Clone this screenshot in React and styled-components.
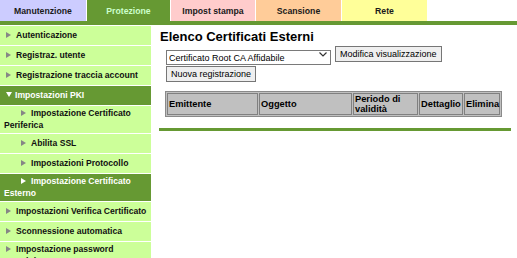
import React from 'react';
import styled, { createGlobalStyle } from 'styled-components';

const Global = createGlobalStyle`
  html, body { margin: 0; padding: 0; background: #fff; }
  body { font-family: "Liberation Sans", Arial, sans-serif; color: #000; }
  * { box-sizing: border-box; }
`;

const Page = styled.div`
  width: 517px;
  height: 258px;
  overflow: hidden;
`;

const TabBar = styled.div`
  display: flex;
  gap: 1px;
  border-bottom: 4px solid #669933;
`;

const Tab = styled.div`
  width: ${p => p.$w}px;
  height: 21px;
  background: ${p => p.$bg};
  color: ${p => (p.$active ? '#ccffcc' : '#1a1a1a')};
  font-size: 8.7px;
  font-weight: bold;
  display: flex;
  align-items: center;
  justify-content: center;
`;

const Body = styled.div`
  display: flex;
  margin-top: 1px;
`;

const Sidebar = styled.nav`
  width: 151px;
  flex: none;
  display: flex;
  flex-direction: column;
  gap: 1px;
`;

const Row = styled.div`
  display: flex;
  align-items: center;
  min-height: 19px;
  padding: 2px 0 2px ${p => (p.$level ? 4 : 6)}px;
  background: ${p => (p.$active ? '#669933' : '#ccff99')};
  color: ${p => (p.$active ? '#ffffff' : '#111111')};
  font-size: 8.6px;
  font-weight: bold;
  line-height: 11.5px;
`;

const Label = styled.span`
  display: block;
`;

const Indent = styled.span`
  display: inline-block;
  width: ${p => (p.$level ? 17 : 0)}px;
`;

const Arrow = styled.span`
  display: inline-block;
  width: 0;
  height: 0;
  vertical-align: 0px;
  margin-right: 5px;
  border-left: 5px solid ${p => (p.$light ? '#ffffff' : '#868686')};
  border-top: 3.5px solid transparent;
  border-bottom: 3.5px solid transparent;
`;

const DownArrow = styled.span`
  display: inline-block;
  width: 0;
  height: 0;
  vertical-align: 1px;
  margin-right: 3px;
  border-top: 5px solid #ffffff;
  border-left: 3.5px solid transparent;
  border-right: 3.5px solid transparent;
`;

const Main = styled.main`
  width: 352px;
  margin-left: 8px;
  display: flex;
  flex-direction: column;
`;

const Title = styled.h1`
  margin: 3px 0 0 1px;
  font-size: 13px;
  line-height: 16px;
  font-weight: bold;
`;

const ControlRow = styled.div`
  display: flex;
  align-items: center;
  gap: 4px;
  margin: ${p => (p.$first ? 1 : 4)}px 0 0 7px;
`;

const SelectWrap = styled.div`
  position: relative;
  width: 165px;
  height: 15px;
`;

const Select = styled.select`
  appearance: none;
  -webkit-appearance: none;
  width: 100%;
  height: 100%;
  margin: 0;
  border: 1px solid #7a7a7a;
  border-radius: 0;
  background: #fff;
  font-family: "Liberation Sans", Arial, sans-serif;
  font-size: 9px;
  color: #000;
  padding: 0 0 0 2px;
  outline: none;
`;

const Chevron = styled.svg`
  position: absolute;
  right: 4px;
  top: 5px;
  pointer-events: none;
`;

const Button = styled.button`
  height: 16px;
  margin: 0;
  padding: 0 4px;
  border: 1px solid #767676;
  border-radius: 0;
  background: #efefef;
  font-family: "Liberation Sans", Arial, sans-serif;
  font-size: 9px;
  color: #000;
  line-height: 14px;
`;

const Table = styled.table`
  margin: 9px 0 0 6px;
  width: 337px;
  table-layout: fixed;
  border-collapse: separate;
  border-spacing: 1px;
  border: 1px solid #8a8a8a;
  background: #c0c0c0;
`;

const Th = styled.th`
  width: ${p => p.$w}px;
  border: 1px solid #808080;
  background: #c0c0c0;
  padding: 0 1px;
  text-align: left;
  vertical-align: middle;
  font-size: 9.3px;
  line-height: 10px;
  font-weight: bold;
  height: 22px;
`;

const Rule = styled.div`
  margin-top: 11px;
  height: 3px;
  background: #669933;
`;

const tabs = [
  { label: 'Manutenzione', w: 86, bg: '#ccccff' },
  { label: 'Protezione', w: 83, bg: '#669933', active: true },
  { label: 'Impost stampa', w: 84, bg: '#ffcccc' },
  { label: 'Scansione', w: 85, bg: '#ffcc99' },
  { label: 'Rete', w: 85, bg: '#ffff99' },
];

const menu = [
  { label: 'Autenticazione', level: 0 },
  { label: 'Registraz. utente', level: 0 },
  { label: 'Registrazione traccia account', level: 0 },
  { label: 'Impostazioni PKI', level: 0, active: true, open: true },
  { label: 'Impostazione Certificato Periferica', level: 1 },
  { label: 'Abilita SSL', level: 1 },
  { label: 'Impostazioni Protocollo', level: 1 },
  { label: 'Impostazione Certificato Esterno', level: 1, active: true },
  { label: 'Impostazioni Verifica Certificato', level: 0 },
  { label: 'Sconnessione automatica', level: 0 },
  { label: 'Impostazione password amministratore', level: 0 },
];

const columns = [
  { label: 'Emittente', w: 91 },
  { label: 'Oggetto', w: 93 },
  { label: 'Periodo di validità', w: 65 },
  { label: 'Dettaglio', w: 44 },
  { label: 'Elimina', w: 36 },
];

export default function App() {
  return (
    <Page>
      <Global />
      <TabBar>
        {tabs.map(t => (
          <Tab key={t.label} $w={t.w} $bg={t.bg} $active={t.active}>
            {t.label}
          </Tab>
        ))}
      </TabBar>
      <Body>
        <Sidebar>
          {menu.map(m => (
            <Row key={m.label} $level={m.level} $active={m.active}>
              <Label>
                <Indent $level={m.level} />
                {m.open ? <DownArrow /> : <Arrow $light={m.active} />}
                {m.label}
              </Label>
            </Row>
          ))}
        </Sidebar>
        <Main>
          <Title>Elenco Certificati Esterni</Title>
          <ControlRow $first>
            <SelectWrap>
              <Select defaultValue="root">
                <option value="root">Certificato Root CA Affidabile</option>
              </Select>
              <Chevron width="8" height="5" viewBox="0 0 8 5">
                <path d="M0.5 0.5 L4 4 L7.5 0.5" fill="none" stroke="#333" strokeWidth="1.2" />
              </Chevron>
            </SelectWrap>
            <Button>Modifica visualizzazione</Button>
          </ControlRow>
          <ControlRow>
            <Button>Nuova registrazione</Button>
          </ControlRow>
          <Table>
            <thead>
              <tr>
                {columns.map(c => (
                  <Th key={c.label} $w={c.w}>{c.label}</Th>
                ))}
              </tr>
            </thead>
          </Table>
          <Rule />
        </Main>
      </Body>
    </Page>
  );
}
